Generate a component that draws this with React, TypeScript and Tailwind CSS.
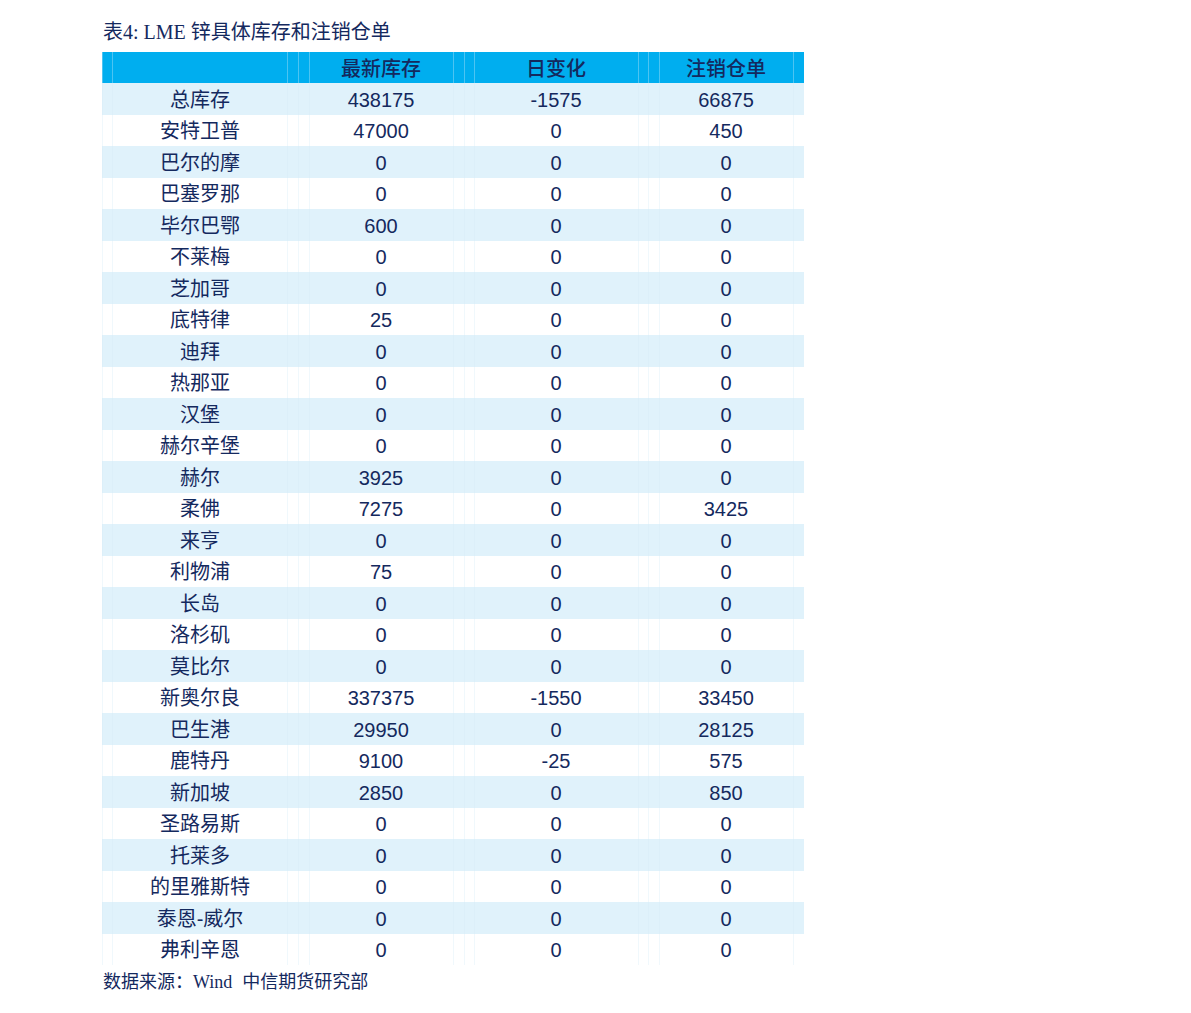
import React from "react";

const rows: [string, string, string, string][] = [
  ["总库存", "438175", "-1575", "66875"],
  ["安特卫普", "47000", "0", "450"],
  ["巴尔的摩", "0", "0", "0"],
  ["巴塞罗那", "0", "0", "0"],
  ["毕尔巴鄂", "600", "0", "0"],
  ["不莱梅", "0", "0", "0"],
  ["芝加哥", "0", "0", "0"],
  ["底特律", "25", "0", "0"],
  ["迪拜", "0", "0", "0"],
  ["热那亚", "0", "0", "0"],
  ["汉堡", "0", "0", "0"],
  ["赫尔辛堡", "0", "0", "0"],
  ["赫尔", "3925", "0", "0"],
  ["柔佛", "7275", "0", "3425"],
  ["来亨", "0", "0", "0"],
  ["利物浦", "75", "0", "0"],
  ["长岛", "0", "0", "0"],
  ["洛杉矶", "0", "0", "0"],
  ["莫比尔", "0", "0", "0"],
  ["新奥尔良", "337375", "-1550", "33450"],
  ["巴生港", "29950", "0", "28125"],
  ["鹿特丹", "9100", "-25", "575"],
  ["新加坡", "2850", "0", "850"],
  ["圣路易斯", "0", "0", "0"],
  ["托莱多", "0", "0", "0"],
  ["的里雅斯特", "0", "0", "0"],
  ["泰恩-威尔", "0", "0", "0"],
  ["弗利辛恩", "0", "0", "0"],
];

const lineXs = [0, 10, 185, 196, 207, 351, 362, 372, 536, 546, 557, 691];

const cjk = "font-['Liberation_Sans','Noto_Sans_CJK_SC',sans-serif]";
const serif = "font-['Liberation_Serif','Noto_Sans_CJK_SC',serif]";

export default function App() {
  return (
    <div className="w-[1191px] h-[1013px] bg-white text-[#14295e]">
      <div className="pl-[103px] pt-[19px]">
        <div className={`${serif} text-[20px] leading-[26px] h-[33px]`}>
          表4: LME <span className={cjk}>锌具体库存和注销仓单</span>
        </div>
      </div>
      <div className="ml-[102px] w-[702px] relative">
        <div className="grid grid-cols-[196px_166px_184px_156px] h-[31px] bg-[#00aeef] items-center pt-[3px]">
          <div />
          <div className={`${cjk} text-center text-[20px] leading-none font-medium text-[#14295e]`}>最新库存</div>
          <div className={`${cjk} text-center text-[20px] leading-none font-medium text-[#14295e]`}>日变化</div>
          <div className={`${cjk} text-center text-[20px] leading-none font-medium text-[#14295e]`}>注销仓单</div>
        </div>
        {rows.map((r, i) => (
          <div
            key={i}
            className={`grid grid-cols-[196px_166px_184px_156px] h-[31.5px] items-center pt-[2px] ${
              i % 2 === 0 ? "bg-[#e0f2fb]" : "bg-white"
            } ${cjk} text-[20px] leading-none`}
          >
            <div className="text-center">{r[0]}</div>
            <div className="text-center">{r[1]}</div>
            <div className="text-center">{r[2]}</div>
            <div className="text-center">{r[3]}</div>
          </div>
        ))}
        <div className="absolute left-0 top-0 h-[31px] w-full pointer-events-none">
          {lineXs.map((x) => (
            <div key={x} className="absolute top-0 h-full w-px bg-[#4cc4f2]" style={{ left: x }} />
          ))}
        </div>
        <div className="absolute left-0 top-[31px] bottom-0 w-full pointer-events-none">
          {lineXs.map((x) => (
            <div key={x} className="absolute top-0 h-full w-px bg-[#d4ebf6] opacity-35" style={{ left: x }} />
          ))}
        </div>
      </div>
      <div className={`pl-[103px] pt-[5px] text-[18px] leading-[24px] ${cjk}`}>
        数据来源：<span className={serif}>Wind</span>&nbsp; 中信期货研究部
      </div>
    </div>
  );
}
